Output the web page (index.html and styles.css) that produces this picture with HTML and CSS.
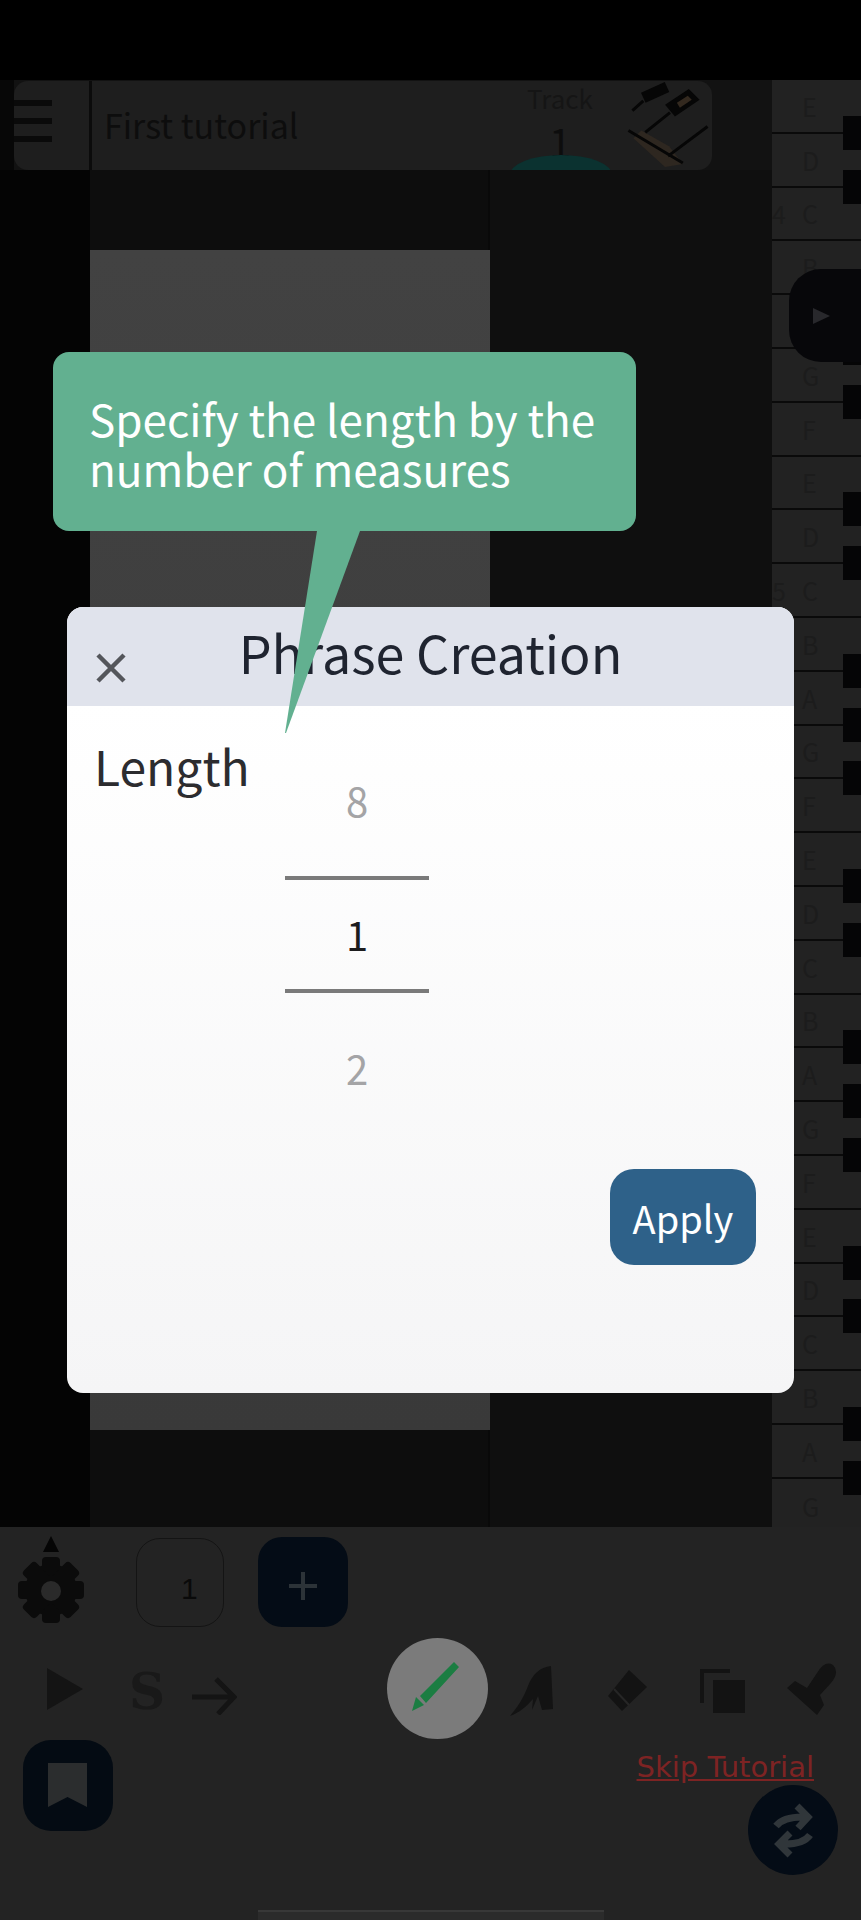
FILE: index.html
```html
<!DOCTYPE html>
<html lang="en">
<head>
<meta charset="utf-8">
<title>Phrase Creation</title>
<link rel="stylesheet" href="styles.css">
</head>
<body>
<div class="screen">
  <div class="status"></div>
  <div class="middle">
    <div class="workspace">
      <div class="topbar">
        <div class="card">
          <div class="menu"><span></span><span></span><span></span></div>
          <div class="song">First tutorial</div>
          <div class="track"><div class="track-label">Track</div><div class="track-num">1</div></div>
          <svg class="thumb" viewBox="0 0 87 90" aria-hidden="true">
            <path class="thumb-wood" d="M8 58 L40 87 L58 84 L44 66 L16 50 Z"/>
            <path class="thumb-line" d="M7 30 L18 20 M20 52 L45 32 M3 50 L58 83 M43 76 L83 46"/>
            <path class="thumb-thick" d="M18 17 L42 6"/>
            <path class="thumb-block" d="M40 24 L64 8 L75 19 L50 36 Z"/>
            <path class="thumb-inner" d="M52 22 L63 15 L67 19 L55 27 Z"/>
          </svg>
          <div class="bump"></div>
        </div>
      </div>
      <div class="canvas">
        <div class="side"></div>
        <div class="stage"><div class="phrase"></div></div>
        <div class="rest"></div>
      </div>
    </div>
    <div class="keyboard">
      <div class="key sharp"><b>E</b></div>
      <div class="key sharp"><b>D</b></div>
      <div class="key"><i>4</i><b>C</b></div>
      <div class="key sharp"><b>B</b></div>
      <div class="key sharp"><b>A</b></div>
      <div class="key sharp"><b>G</b></div>
      <div class="key"><b>F</b></div>
      <div class="key sharp"><b>E</b></div>
      <div class="key sharp"><b>D</b></div>
      <div class="key"><i>5</i><b>C</b></div>
      <div class="key sharp"><b>B</b></div>
      <div class="key sharp"><b>A</b></div>
      <div class="key sharp"><b>G</b></div>
      <div class="key"><b>F</b></div>
      <div class="key sharp"><b>E</b></div>
      <div class="key sharp"><b>D</b></div>
      <div class="key"><b>C</b></div>
      <div class="key sharp"><b>B</b></div>
      <div class="key sharp"><b>A</b></div>
      <div class="key sharp"><b>G</b></div>
      <div class="key"><b>F</b></div>
      <div class="key sharp"><b>E</b></div>
      <div class="key sharp"><b>D</b></div>
      <div class="key"><b>C</b></div>
      <div class="key sharp"><b>B</b></div>
      <div class="key sharp"><b>A</b></div>
      <div class="key last"><b>G</b></div>
      <div class="play-tab"><span class="play-tab-arrow"></span></div>
    </div>
  </div>

  <div class="toolbar">
    <div class="row row-one">
      <div class="gear-group">
        <span class="gear-arrow"></span>
        <svg class="gear" viewBox="0 0 68 66" aria-hidden="true">
          <g class="gear-body">
            <circle cx="34" cy="33" r="26"/>
            <rect x="25" y="0" width="18" height="66" rx="4"/>
            <rect x="25" y="0" width="18" height="66" rx="4" transform="rotate(45 34 33)"/>
            <rect x="25" y="0" width="18" height="66" rx="4" transform="rotate(90 34 33)"/>
            <rect x="25" y="0" width="18" height="66" rx="4" transform="rotate(135 34 33)"/>
          </g>
          <circle class="gear-hole" cx="34" cy="34" r="10"/>
        </svg>
      </div>
      <div class="page-box">1</div>
      <div class="add-btn">
        <svg viewBox="0 0 28 28" aria-hidden="true"><path d="M14 0 V28 M0 14 H28"/></svg>
      </div>
    </div>

    <div class="row row-two">
      <span class="play"></span>
      <span class="s-mark">S</span>
      <svg class="arrow" viewBox="0 0 45 38" aria-hidden="true"><path d="M0 20 H41 M24 2 L42 20 L26 37"/></svg>
      <div class="pen-circle">
        <svg viewBox="0 0 101 101" aria-hidden="true">
          <path d="M67 24 L72 29 L39 65 L33 58 Z M29 59 L37 67 L25 73 Z"/>
        </svg>
      </div>
      <svg class="tool tool-quill" viewBox="0 0 43 50" aria-hidden="true">
        <path d="M41 0 C30 1 22 9 18 20 C14 31 7 42 0 50 C9 47 17 40 23 33 L22 44 L28 30 L32 44 L43 43 Z"/>
      </svg>
      <svg class="tool tool-eraser" viewBox="0 0 39 41" aria-hidden="true">
        <path d="M21 0 L39 17 L14 41 L0 26 Z"/>
        <path class="eraser-band" d="M6 19 L21 35"/>
      </svg>
      <svg class="tool tool-copy" viewBox="0 0 45 44" aria-hidden="true">
        <path class="copy-back" d="M30 2 H2 V34"/>
        <rect x="13" y="11" width="32" height="33"/>
      </svg>
      <svg class="tool tool-stamp" viewBox="0 0 50 52" aria-hidden="true">
        <path d="M0 25 L8 18 L20 25 L30 10 Q38 -3 46 2 Q53 9 44 20 L33 32 L37 42 L30 52 Z"/>
      </svg>
    </div>

    <div class="row row-three">
      <div class="mark-btn">
        <svg viewBox="0 0 39 44" aria-hidden="true"><path d="M0 0 H39 V44 L19.500 34 L0 44 Z"/></svg>
      </div>
      <div class="row-end">
        <a class="skip">Skip Tutorial</a>
        <div class="swap">
          <svg viewBox="0 0 90 90" aria-hidden="true">
            <path d="M28 41 Q36 31 58 32 M49 21 L60 32 L50 43"/>
            <path d="M62 50 Q55 60 33 59 M42 48 L31 59 L42 70"/>
          </svg>
        </div>
      </div>
    </div>
    <div class="home-bar"></div>
  </div>

  <div class="dialog">
    <div class="dialog-head">
      <svg class="close" viewBox="0 0 30 30" aria-hidden="true"><path d="M2 2 L28 28 M28 2 L2 28"/></svg>
      <div class="dialog-title">Phrase Creation</div>
    </div>
    <div class="dialog-body">
      <div class="form-row">
        <div class="form-label">Length</div>
        <div class="picker">
          <div class="pick pick-off">8</div>
          <div class="pick pick-on">1</div>
          <div class="pick pick-off">2</div>
        </div>
      </div>
      <div class="actions"><button class="apply">Apply</button></div>
    </div>
  </div>

  <div class="bubble">
    Specify the length by the<br>number of measures
    <svg class="tail" viewBox="0 0 75 202" aria-hidden="true"><path d="M32 0 H75 L1 202 H0 Z"/></svg>
  </div>
</div>
</body>
</html>
```
FILE: styles.css
```css
* { box-sizing: border-box; }
html, body { margin: 0; padding: 0; background: #000; }
.screen {
  position: relative;
  width: 861px;
  height: 1920px;
  overflow: hidden;
  display: flex;
  flex-direction: column;
  font-family: "Noto Sans CJK JP", "Noto Sans", sans-serif;
}
.status { height: 80px; flex: none; background: #000; }
.middle { height: 1447px; flex: none; display: flex; }
.workspace { width: 772px; flex: none; display: flex; flex-direction: column; }

.topbar {
  height: 90px;
  flex: none;
  padding: 1px 60px 0 14px;
  background: linear-gradient(90deg, #070707 14px, #121212 14px);
}
.card {
  position: relative;
  height: 89px;
  display: flex;
  background: #1e1e1e;
  border-radius: 14px;
  overflow: hidden;
}
.menu {
  width: 78px;
  flex: none;
  padding: 19px 37px 0 0;
  display: flex;
  flex-direction: column;
  gap: 12px;
  border-right: 3px solid #0b0b0b;
}
.menu span { height: 6px; background: #0a0a0a; }
.song {
  padding: 15px 0 0 12px;
  font-size: 34px;
  line-height: 58px;
  color: #0d0d0d;
  flex: 1;
}
.track { width: 100px; text-align: center; margin-right: 15px; }
.track-label { font-size: 26px; line-height: 30px; margin-top: 2px; color: #151515; }
.track-num { font-size: 40px; line-height: 40px; margin-top: 8px; color: #0d0d0d; }
.thumb { width: 87px; height: 89px; flex: none; filter: blur(0.5px); }
.thumb-wood { fill: #2e2720; }
.thumb-line { fill: none; stroke: #060606; stroke-width: 3; }
.thumb-thick { fill: none; stroke: #060606; stroke-width: 11; }
.thumb-block { fill: #060606; }
.thumb-inner { fill: #33291f; }
.bump {
  position: absolute;
  left: 496px;
  top: 74px;
  width: 102px;
  height: 40px;
  border-radius: 50%;
  background: #0b3230;
}

.canvas { flex: 1; display: flex; }
.side { width: 90px; flex: none; background: #040404; }
.stage {
  width: 400px;
  flex: none;
  padding-top: 80px;
  background: #0d0d0d;
  border-right: 2px solid #090909;
}
.phrase {
  height: 1180px;
  margin-right: -2px;
  background: linear-gradient(180deg, #424242 0%, #393939 100%);
}
.rest { flex: 1; background: #0f0f0f; }

.keyboard {
  position: relative;
  width: 89px;
  flex: none;
  background: #222;
}
.key {
  position: relative;
  height: 53.800px;
  border-bottom: 2px solid #0a0a0a;
  display: flex;
  align-items: center;
  padding-left: 30px;
  font-size: 25px;
  color: #1c1c1c;
}
.key.last { border-bottom: 0; }
.key b { font-weight: 400; }
.key i { position: absolute; left: 0; font-style: normal; }
.key.sharp::after {
  content: "";
  position: absolute;
  right: 0;
  bottom: -18px;
  width: 18px;
  height: 34px;
  background: #050506;
}
.play-tab {
  position: absolute;
  left: 17px;
  top: 189px;
  right: 0;
  height: 93px;
  display: flex;
  align-items: center;
  padding-left: 24px;
  background: #07070a;
  border-radius: 32px 0 0 32px;
}
.play-tab-arrow {
  width: 0;
  height: 0;
  border-left: 17px solid #28282c;
  border-top: 8px solid transparent;
  border-bottom: 8px solid transparent;
}

.toolbar { flex: 1; background: #232323; }
.row { display: flex; }
.row-one { height: 110px; padding: 9px 0 0 17px; align-items: flex-start; }
.gear-group { width: 68px; flex: none; display: flex; flex-direction: column; align-items: center; }
.gear-arrow {
  width: 0;
  height: 0;
  border-bottom: 16px solid #050505;
  border-left: 8px solid transparent;
  border-right: 8px solid transparent;
}
.gear { width: 68px; height: 66px; margin-top: 5px; }
.gear-body { fill: #0b0b0b; }
.gear-hole { fill: #2a2a2a; }
.page-box {
  width: 88px;
  height: 89px;
  margin: 2px 0 0 51px;
  padding-left: 44px;
  border: 1px solid #141414;
  border-radius: 24px;
  font-family: "Liberation Sans", sans-serif;
  font-size: 30px;
  line-height: 100px;
  color: #0a0a0a;
}
.add-btn {
  width: 90px;
  height: 90px;
  margin: 1px 0 0 34px;
  padding-top: 8px;
  border-radius: 24px;
  background: #040c16;
  display: flex;
  align-items: center;
  justify-content: center;
}
.add-btn svg { width: 28px; height: 28px; fill: none; stroke: #2c3338; stroke-width: 4; }

.row-two { height: 103px; align-items: center; }
.play {
  width: 0;
  height: 0;
  margin-left: 47px;
  border-left: 36px solid #141414;
  border-top: 21px solid transparent;
  border-bottom: 21px solid transparent;
}
.s-mark {
  margin: 6px 0 0 46px;
  width: 36px;
  font-family: "DejaVu Serif", serif;
  font-weight: 700;
  font-size: 50px;
  line-height: 56px;
  color: #191919;
}
.arrow { width: 45px; height: 38px; margin: 15px 0 0 27px; fill: none; stroke: #141414; stroke-width: 5; filter: blur(0.6px); }
.pen-circle {
  width: 101px;
  height: 101px;
  margin-left: 150px;
  border-radius: 50%;
  background: #7b7b7b;
}
.pen-circle svg { display: block; width: 101px; height: 101px; fill: #1b7d42; }
.tool { flex: none; fill: #131313; filter: blur(0.6px); }
.tool-quill { width: 43px; height: 50px; margin: 4px 0 0 22px; }
.tool-eraser { width: 39px; height: 41px; margin: 3px 0 0 55px; }
.eraser-band { fill: none; stroke: #262626; stroke-width: 2; }
.tool-copy { width: 45px; height: 44px; margin: 5px 0 0 53px; }
.copy-back { fill: none; stroke: #131313; stroke-width: 4; }
.tool-stamp { width: 50px; height: 52px; margin: 1px 0 0 42px; }

.row-three { height: 170px; justify-content: space-between; padding: 0 23px; }
.mark-btn {
  width: 90px;
  height: 91px;
  padding: 23px 0 0 25px;
  border-radius: 28px;
  background: #040b13;
}
.mark-btn svg { display: block; width: 39px; height: 44px; fill: #2b2d2e; }
.row-end { display: flex; flex-direction: column; align-items: flex-end; padding-top: 9px; }
.skip {
  margin-right: 24px;
  font-family: "DejaVu Sans", sans-serif;
  font-size: 29px;
  line-height: 36px;
  color: #7e2323;
  text-decoration: underline;
}
.swap {
  width: 90px;
  height: 90px;
  border-radius: 50%;
  background: #040c16;
}
.swap svg { display: block; width: 90px; height: 90px; fill: none; stroke: #30363a; stroke-width: 7; }
.home-bar {
  width: 346px;
  height: 10px;
  margin-left: 258px;
  background: #2b2b2b;
  border-top: 2px solid #383838;
}

.dialog {
  position: absolute;
  left: 67px;
  top: 607px;
  width: 727px;
  height: 786px;
  display: flex;
  flex-direction: column;
  border-radius: 16px;
  overflow: hidden;
  background: linear-gradient(180deg, #fff 12%, #f5f5f6 100%);
}
.dialog-head {
  position: relative;
  height: 99px;
  flex: none;
  background: #e0e3ec;
}
.close {
  position: absolute;
  left: 29px;
  top: 46px;
  width: 30px;
  height: 30px;
  fill: none;
  stroke: #54565b;
  stroke-width: 4.500;
}
.dialog-title {
  text-align: center;
  font-size: 52px;
  line-height: 89px;
  color: #1f2430;
}
.dialog-body { flex: 1; display: flex; flex-direction: column; }
.form-row { display: flex; height: 463px; }
.form-label {
  width: 218px;
  padding: 27px 0 0 27px;
  font-size: 48px;
  line-height: 64px;
  color: #2c2c2f;
}
.picker { width: 144px; flex: none; padding-top: 28px; }
.pick {
  text-align: center;
  font-size: 40px;
}
.pick-off { color: #a4a4a6; }
.pick:first-child { height: 142px; line-height: 132px; }
.pick-on {
  height: 117px;
  line-height: 109px;
  color: #1c1c1e;
  border-top: 4px solid #7a7a7a;
  border-bottom: 4px solid #7a7a7a;
}
.pick:last-child { height: 135px; line-height: 151px; }
.actions { display: flex; justify-content: flex-end; padding-right: 38px; }
.apply {
  width: 146px;
  height: 96px;
  padding: 0;
  border: 0;
  border-radius: 24px;
  background: #2e6189;
  color: #fff;
  font-family: inherit;
  font-size: 38px;
}

.bubble {
  position: absolute;
  left: 53px;
  top: 352px;
  width: 583px;
  height: 179px;
  padding: 41px 0 0 36px;
  border-radius: 16px;
  background: #62b090;
  color: #fff;
  font-size: 44px;
  line-height: 50px;
}
.tail {
  position: absolute;
  left: 232px;
  top: 179px;
  width: 75px;
  height: 202px;
  fill: #62b090;
}
```
